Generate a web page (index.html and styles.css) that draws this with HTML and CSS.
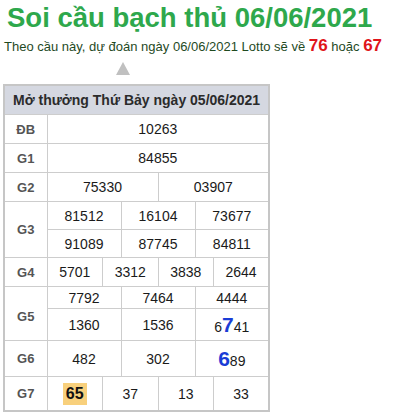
FILE: index.html
```html
<!DOCTYPE html>
<html lang="vi">
<head>
<meta charset="utf-8">
<link rel="stylesheet" href="styles.css">
</head>
<body>
<div class="page">
  <h1 class="title">Soi cầu bạch thủ 06/06/2021</h1>
  <p class="lead">Theo cầu này, dự đoán ngày 06/06/2021 Lotto sẽ về <b class="hot">76</b> hoặc <b class="hot">67</b></p>
  <div class="arrow-row"><span class="arrow"></span></div>
  <table class="kq">
    <colgroup>
      <col class="c-label">
      <col><col><col><col><col><col><col><col><col><col><col><col>
    </colgroup>
    <thead>
      <tr><th colspan="13" class="head">Mở thưởng Thứ Bảy ngày 05/06/2021</th></tr>
    </thead>
    <tbody>
      <tr class="r"><th class="lbl">ĐB</th><td colspan="12">10263</td></tr>
      <tr class="r"><th class="lbl">G1</th><td colspan="12">84855</td></tr>
      <tr class="r"><th class="lbl">G2</th><td colspan="6">75330</td><td colspan="6">03907</td></tr>
      <tr class="r-sub"><th class="lbl" rowspan="2">G3</th><td colspan="4">81512</td><td colspan="4">16104</td><td colspan="4">73677</td></tr>
      <tr class="r-sub"><td colspan="4">91089</td><td colspan="4">87745</td><td colspan="4">84811</td></tr>
      <tr class="r"><th class="lbl">G4</th><td colspan="3">5701</td><td colspan="3">3312</td><td colspan="3">3838</td><td colspan="3">2644</td></tr>
      <tr class="r-g5a"><th class="lbl lbl-top" rowspan="2">G5</th><td colspan="4">7792</td><td colspan="4">7464</td><td colspan="4">4444</td></tr>
      <tr class="r-g5b"><td colspan="4">1360</td><td colspan="4">1536</td><td colspan="4">6<b class="big">7</b>41</td></tr>
      <tr class="r-g6"><th class="lbl">G6</th><td colspan="4">482</td><td colspan="4">302</td><td colspan="4"><b class="big">6</b>89</td></tr>
      <tr class="r-g7"><th class="lbl">G7</th><td colspan="3"><b class="mark">65</b></td><td colspan="3">37</td><td colspan="3">13</td><td colspan="3">33</td></tr>
    </tbody>
  </table>
</div>
</body>
</html>
```
FILE: styles.css
```css
html, body {
  margin: 0;
  padding: 0;
  background: #fff;
}
body {
  font-family: "Liberation Sans", Arial, sans-serif;
}
.page {
  padding: 0 0 0 3px;
}
.title {
  margin: 0;
  padding: 1px 0 0 4px;
  font-size: 27.5px;
  line-height: 33px;
  font-weight: bold;
  color: #2ea84c;
}
.lead {
  margin: 0;
  padding: 2px 0 0 1px;
  font-size: 13px;
  line-height: 20px;
  color: #1f4a1f;
}
.hot {
  color: #e0141a;
  font-size: 17px;
}
.arrow-row {
  display: flex;
  padding: 5px 0 0 113px;
  height: 27px;
  box-sizing: border-box;
}
.arrow {
  width: 0;
  height: 0;
  border-left: 7px solid transparent;
  border-right: 7px solid transparent;
  border-bottom: 13px solid #c0c0c0;
}
.kq {
  border-collapse: collapse;
  table-layout: fixed;
  width: 265px;
  border: 2px solid #c6c6c6;
  font-size: 14px;
  color: #1a1a1a;
}
.kq col { width: 18.5px; }
.kq col.c-label { width: 43px; }
.kq th, .kq td {
  border: 1px solid #cdcdcd;
  padding: 0;
  text-align: center;
  vertical-align: middle;
  white-space: nowrap;
}
.head {
  background: #d5d8e1;
  color: #2b2b2b;
  font-weight: bold;
  font-size: 14px;
  height: 28px;
}
.lbl {
  color: #555;
  font-weight: bold;
  font-size: 13px;
}
.lbl-top {
  vertical-align: top;
  padding-top: 5px !important;
}
.r th, .r td { height: 28px; }
.r-sub td { height: 27px; }
.r-g5a td { height: 21px; }
.r-g5b td { height: 31px; }
.r-g6 td { height: 35px; }
.r-g7 td { height: 33px; }
.big {
  color: #1a3dd6;
  font-size: 21px;
  font-weight: bold;
}
.mark {
  display: inline-block;
  background: #f8d07c;
  color: #111;
  font-size: 16px;
  padding: 2px 3px;
  line-height: 18px;
}
```
